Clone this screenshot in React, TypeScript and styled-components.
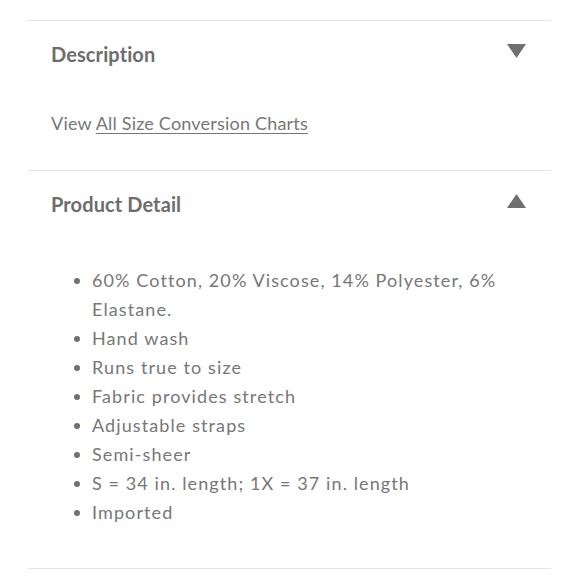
import React from "react";
import styled, { createGlobalStyle } from "styled-components";

const Global = createGlobalStyle`
  html, body { margin: 0; padding: 0; background: #ffffff; }
  body { font-family: "Lato", "Liberation Sans", sans-serif; -webkit-font-smoothing: antialiased; }
`;

const Page = styled.div`
  width: 580px;
  box-sizing: border-box;
  padding: 20px 29px 0 28px;
`;

const Section = styled.section`
  border-top: 1px solid #e4e4e4;
  &:last-child { border-bottom: 1px solid #e4e4e4; }
`;

const Header = styled.div`
  display: flex;
  align-items: center;
  justify-content: space-between;
  padding: 19px 25px 0 23px;
  height: 28px;
`;

const Title = styled.h2`
  margin: 0;
  font-size: 20px;
  line-height: 28px;
  font-weight: 700;
  color: #6d6d6d;
  letter-spacing: 0.1px;
`;

const Arrow = styled.svg`
  width: 19px;
  height: 14px;
  margin-top: -7px;
  fill: #6f6f6f;
`;

const Body = styled.div<{ $top: number; $bottom: number }>`
  padding: ${(p) => p.$top}px 0 ${(p) => p.$bottom}px 23px;
`;

const Text = styled.p`
  margin: 0;
  font-size: 18px;
  line-height: 28px;
  color: #777777;
  letter-spacing: 0.2px;
`;

const Link = styled.a`
  color: #777777;
  text-decoration: underline;
  text-underline-offset: 3px;
  text-decoration-thickness: 1px;
`;

const List = styled.ul`
  list-style: none;
  margin: 0;
  padding: 0;
  width: 460px;
`;

const Item = styled.li`
  display: flex;
  align-items: flex-start;
  font-size: 18px;
  line-height: 29px;
  color: #777777;
  letter-spacing: 1.1px;
`;

const Dot = styled.span`
  flex: none;
  width: 6px;
  height: 6px;
  border-radius: 50%;
  background: #707070;
  margin: 12px 12px 0 23px;
`;

const Caret = ({ up }: { up?: boolean }) => (
  <Arrow viewBox="0 0 19 14">
    {up ? <polygon points="0,14 19,14 9.5,0" /> : <polygon points="0,0 19,0 9.5,14" />}
  </Arrow>
);

const details = [
  "60% Cotton, 20% Viscose, 14% Polyester, 6% Elastane.",
  "Hand wash",
  "Runs true to size",
  "Fabric provides stretch",
  "Adjustable straps",
  "Semi-sheer",
  "S = 34 in. length; 1X = 37 in. length",
  "Imported",
];

export default function App() {
  return (
    <>
      <Global />
      <Page>
        <Section>
          <Header>
            <Title>Description</Title>
            <Caret />
          </Header>
          <Body $top={41} $bottom={33}>
            <Text>
              View <Link href="#">All Size Conversion Charts</Link>
            </Text>
          </Body>
        </Section>
        <Section>
          <Header>
            <Title>Product Detail</Title>
            <Caret up />
          </Header>
          <Body $top={48} $bottom={41}>
            <List>
              {details.map((d) => (
                <Item key={d}>
                  <Dot />
                  <span>{d}</span>
                </Item>
              ))}
            </List>
          </Body>
        </Section>
      </Page>
    </>
  );
}
